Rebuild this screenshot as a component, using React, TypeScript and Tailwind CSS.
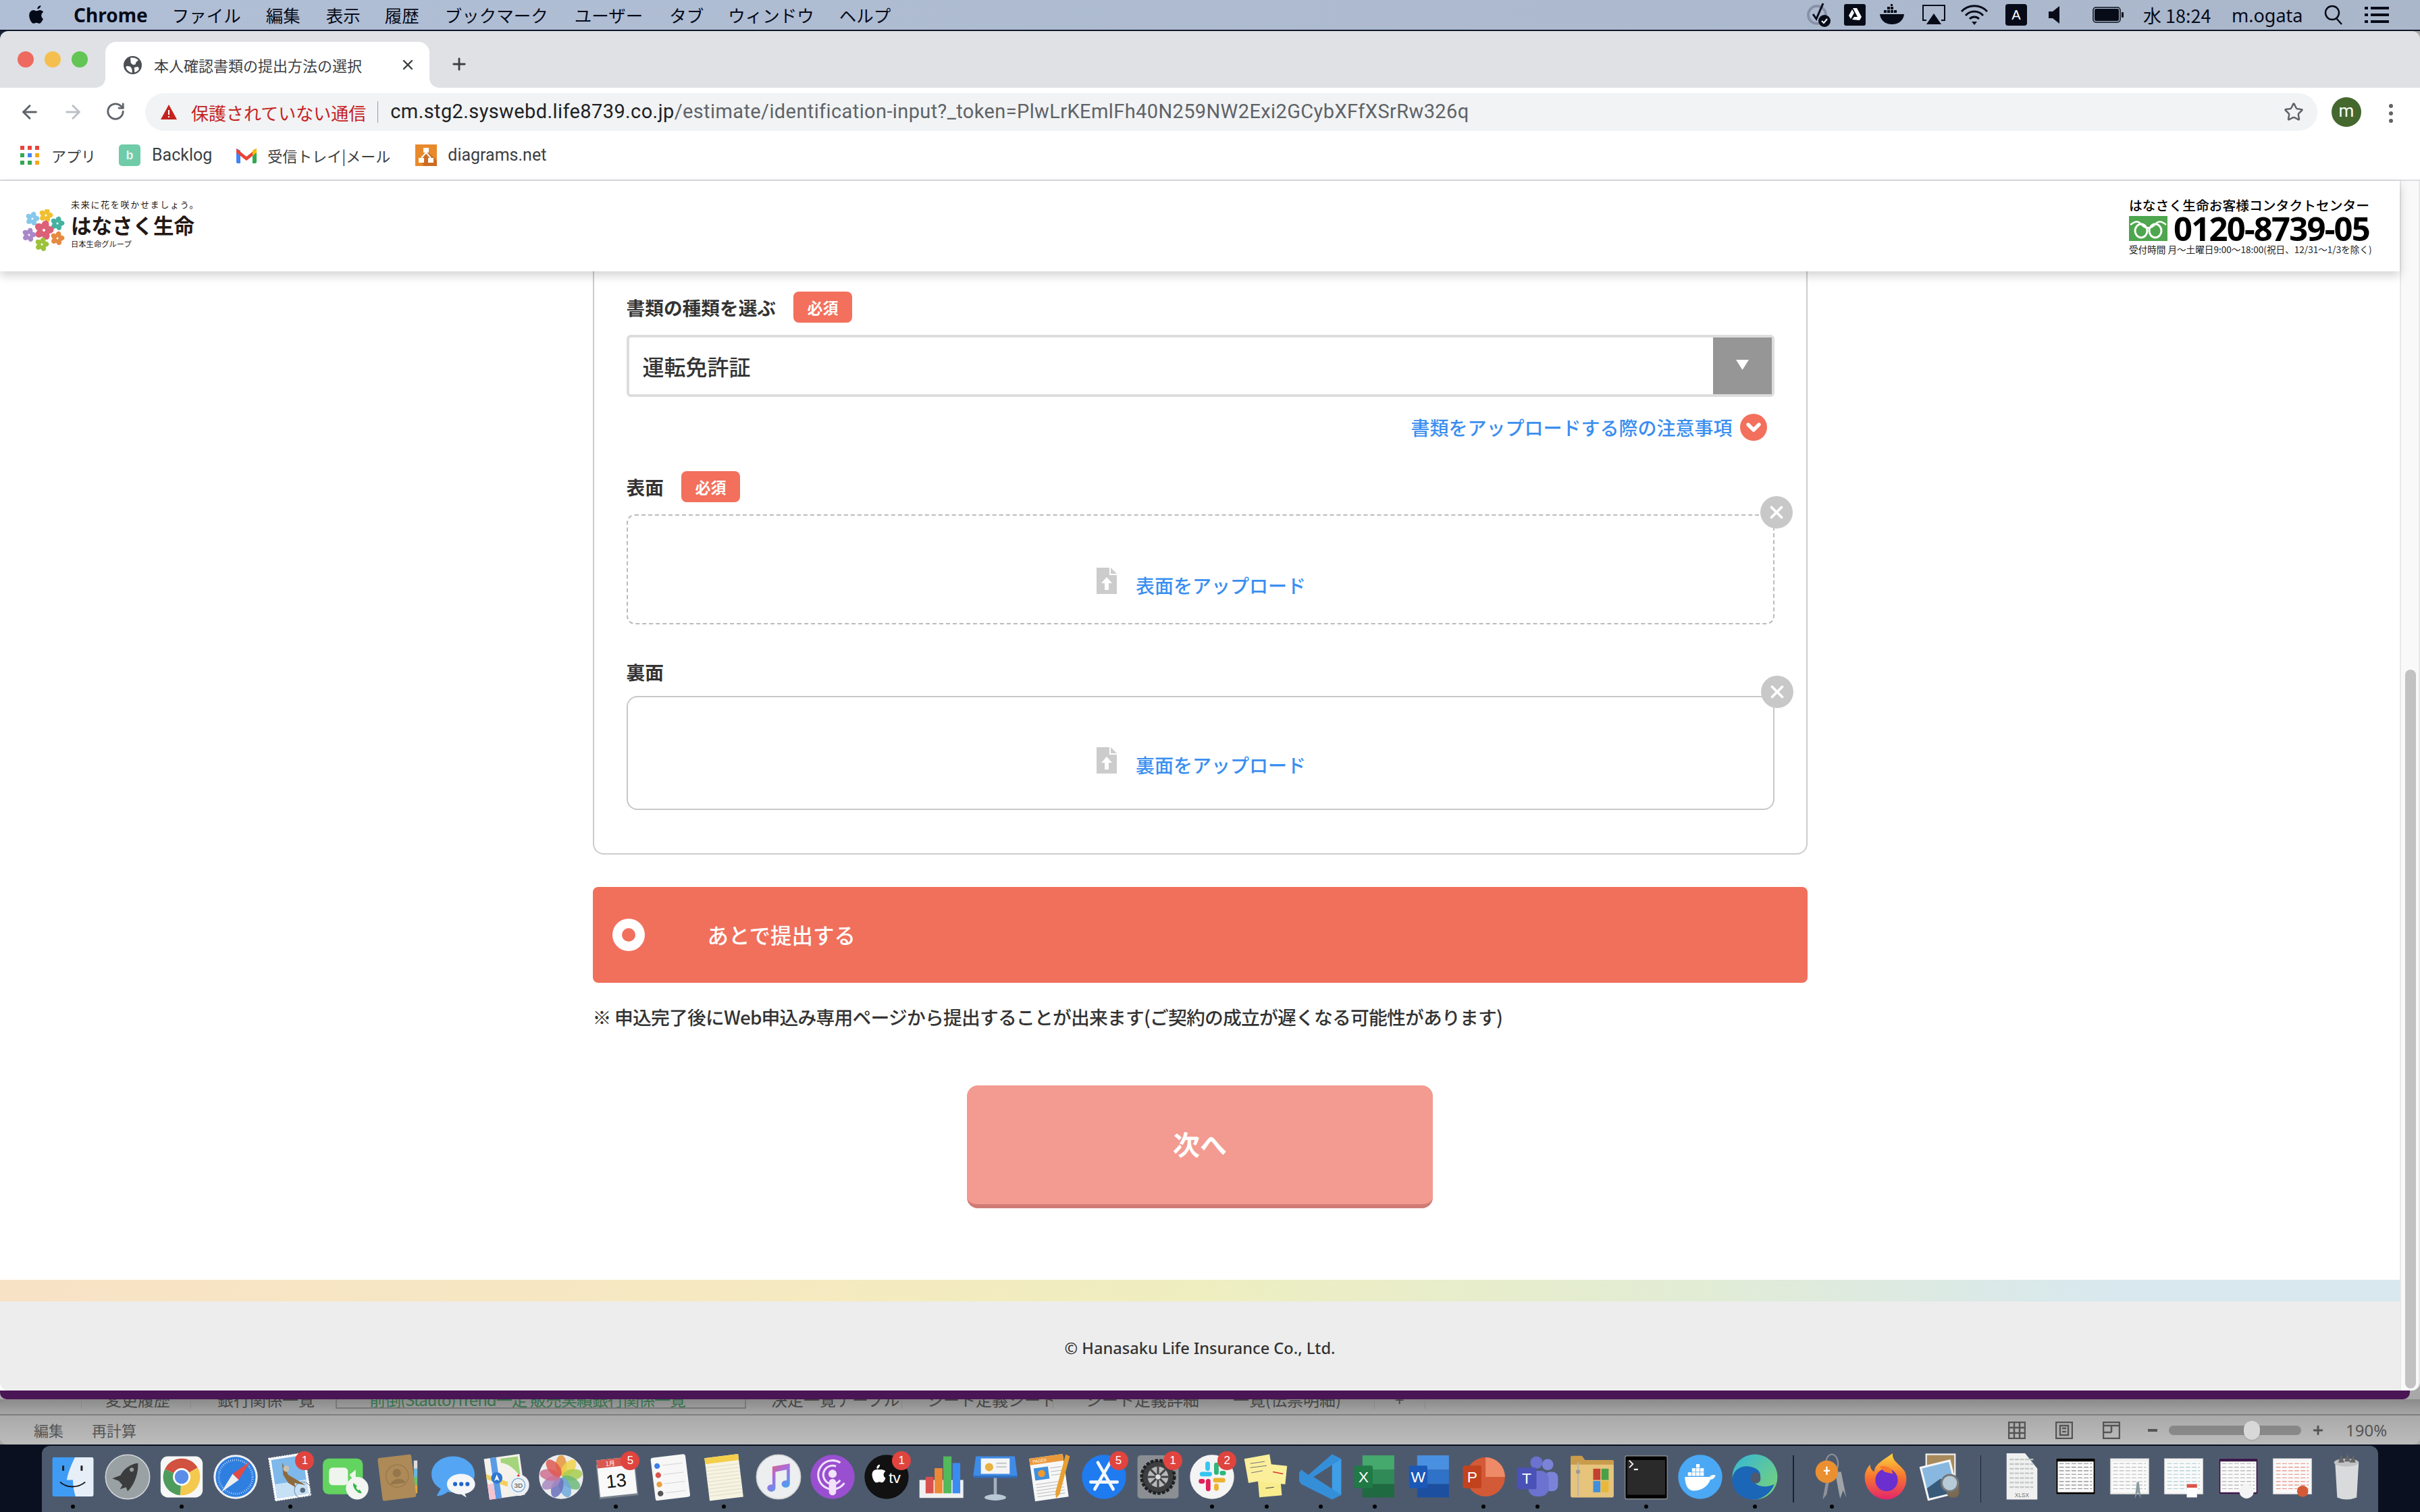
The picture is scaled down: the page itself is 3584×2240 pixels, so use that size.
import { ArrowLeft, ArrowRight, ChevronDown, Plus, RotateCw, Star, X } from "lucide-react";
import type { ReactNode } from "react";

const Svg = ({ children, className = "w-[76px] h-[76px]" }: { children: ReactNode; className?: string }) => (
  <svg viewBox="0 0 100 100" className={className}>
    {children}
  </svg>
);

const sector = (a0: number, a1: number, r: number, c = 50) => {
  const p = (a: number) => `${c + r * Math.cos((a * Math.PI) / 180)} ${c + r * Math.sin((a * Math.PI) / 180)}`;
  return `M${c} ${c}L${p(a0)}A${r} ${r} 0 ${a1 - a0 > 180 ? 1 : 0} 1 ${p(a1)}Z`;
};

/* dock icons */
const Finder = () => (
  <Svg>
    <rect x="10" y="12" width="80" height="76" rx="3" fill="#3f9cf5" />
    <path d="M54 12C46 28 40 44 38 56H50C50 68 52 78 55 88H87q3 0 3-3V15q0-3-3-3Z" fill="#e6eff8" />
    <rect x="29" y="28" width="4" height="10" fill="#222" />
    <rect x="65" y="28" width="4" height="10" fill="#222" />
    <path d="M25 60C38 72 60 72 74 60" stroke="#111" strokeWidth="2.5" fill="none" />
  </Svg>
);
const Launchpad = () => (
  <Svg>
    <circle cx="50" cy="50" r="43" fill="#9aa1a4" stroke="#d4d6d8" strokeWidth="2" />
    <path d="M70 23C55 25 42 35 36 47L20 53L33 58L40 66L35 74L47 70L50 78C62 68 72 42 70 23Z" fill="#3a3c3e" />
    <circle cx="58" cy="36" r="4" fill="#999" />
  </Svg>
);
const Chrome = () => (
  <Svg>
    <rect x="9" y="10" width="82" height="80" rx="14" fill="#f7f7f7" />
    <path d={sector(-155, -30, 36)} fill="#d0523f" />
    <path d={sector(-30, 95, 36)} fill="#f3c94f" />
    <path d={sector(95, 205, 36)} fill="#4e9c5c" />
    <circle cx="50" cy="50" r="17" fill="#fff" />
    <circle cx="50" cy="50" r="13.5" fill="#5a8ee8" />
  </Svg>
);
const Safari = () => (
  <Svg>
    <circle cx="50" cy="50" r="43" fill="#eef1f4" />
    <circle cx="50" cy="50" r="39" fill="#2f7fe0" />
    <circle cx="50" cy="50" r="33" fill="none" stroke="#cfe4fb" strokeWidth="4" strokeDasharray="1 3" />
    <path d="M78 20L44 44L56 56Z" fill="#e24a44" />
    <path d="M22 80L44 44L56 56Z" fill="#eee" />
  </Svg>
);
const Mail = () => (
  <Svg>
    <g transform="rotate(-9 48 50)">
      <rect x="14" y="8" width="70" height="84" fill="#fff" stroke="#fff" strokeDasharray="3 2" strokeWidth="2" />
      <rect x="18" y="12" width="62" height="76" fill="#7fb8ea" />
      <rect x="18" y="60" width="62" height="28" fill="#c6e0f6" />
    </g>
    <path d="M34 22L46 46L80 66L58 62L60 70L46 62L36 46Z" fill="#8d6a3e" />
    <circle cx="42" cy="34" r="6" fill="#c9c0b0" />
    <circle cx="74" cy="76" r="16" fill="none" stroke="#5a6b80" strokeWidth="1.5" strokeDasharray="2 1" />
    <circle cx="74" cy="76" r="5" fill="#5a6b80" />
  </Svg>
);
const FaceTime = () => (
  <Svg>
    <rect x="8" y="14" width="78" height="70" rx="12" fill="#62d45f" />
    <rect x="20" y="32" width="37" height="34" rx="7" fill="#eef5ec" />
    <path d="M60 46L72 36V62Z" fill="#eef5ec" />
    <circle cx="75" cy="72" r="22" fill="#f2f5f1" />
    <path d="M68 62c-2 2-1 8 4 14s10 7 12 5l-4-6-3 1c-2-1-4-4-4-6l2-2Z" fill="#35b84a" />
  </Svg>
);
const Contacts = () => (
  <Svg>
    <rect x="80" y="18" width="7" height="16" fill="#ddd" />
    <rect x="80" y="34" width="7" height="16" fill="#67b7e0" />
    <rect x="80" y="50" width="7" height="16" fill="#6cc06c" />
    <rect x="80" y="66" width="7" height="16" fill="#e5a93c" />
    <g transform="rotate(-7 50 50)">
      <rect x="14" y="9" width="66" height="84" rx="4" fill="#ad8a58" />
      <circle cx="48" cy="48" r="22" fill="none" stroke="#95764a" strokeWidth="1.5" />
      <circle cx="48" cy="42" r="8" fill="#95764a" />
      <path d="M33 63c4-12 26-12 30 0" fill="#95764a" />
    </g>
  </Svg>
);
const Messages = () => (
  <Svg>
    <path d="M50 10C26 10 8 26 8 45c0 12 7 22 18 28l-8 14c8 0 16-3 22-8 3 1 7 1 10 1 24 0 42-16 42-35S74 10 50 10Z" fill="#54a6f5" />
    <path d="M66 44c-16 0-28 9-28 20s12 20 28 20l10 6-3-7c12-3 20-10 20-19 0-11-12-20-27-20Z" fill="#f4f6f8" />
    <circle cx="54" cy="64" r="4" fill="#2166c9" />
    <circle cx="66" cy="64" r="4" fill="#2166c9" />
    <circle cx="78" cy="64" r="4" fill="#2166c9" />
  </Svg>
);
const Maps = () => (
  <Svg>
    <g transform="rotate(-8 44 50)">
      <rect x="10" y="10" width="70" height="80" fill="#f4f2ea" />
      <path d="M42 14H76V54C66 36 54 24 42 22Z" fill="#a4d47c" />
      <path d="M10 50L60 76V66L10 40Z" fill="#f2d060" />
      <rect x="22" y="10" width="12" height="80" fill="#5a9be8" />
      <rect x="10" y="60" width="12" height="30" fill="#f4c4d0" />
    </g>
    <circle cx="30" cy="52" r="11" fill="#2f78d0" />
    <path d="M30 45L35 58L30 55L25 58Z" fill="#fff" />
    <circle cx="72" cy="66" r="21" fill="#eef0f2" />
    <circle cx="72" cy="66" r="13" fill="none" stroke="#5c9bd0" strokeWidth="1.5" />
    <text x="72" y="71" textAnchor="middle" fontSize="13" fill="#444" fontFamily="Liberation Sans">3D</text>
    <path d="M72 44l3 5h-6Z" fill="#d33" />
  </Svg>
);
const Photos = () => {
  const cols = ["#e8953c", "#eed34a", "#a8cc50", "#6fb97a", "#6fa8dc", "#6a6fbc", "#a887c0", "#cf6f90", "#de5a52"];
  return (
    <Svg>
      <circle cx="50" cy="50" r="43" fill="#eceded" />
      {cols.map((c, i) => (
        <ellipse key={c} cx="50" cy="28" rx="11" ry="20" fill={c} opacity="0.85" transform={`rotate(${i * 40} 50 50)`} />
      ))}
    </Svg>
  );
};
const Calendar = () => (
  <Svg>
    <rect x="14" y="22" width="76" height="68" fill="#78828c" transform="rotate(-6 50 50)" />
    <g transform="rotate(-6 50 50)">
      <rect x="16" y="14" width="72" height="72" fill="#f9f9f9" />
      <rect x="16" y="14" width="72" height="16" fill="#d9584f" />
      <text x="42" y="27" textAnchor="middle" fontSize="12" fill="#fff" fontFamily="Noto Sans CJK JP">1月</text>
      <text x="50" y="70" textAnchor="middle" fontSize="36" fill="#111" fontFamily="Liberation Sans">13</text>
    </g>
  </Svg>
);
const Reminders = () => (
  <Svg>
    <g transform="rotate(-7 50 50)">
      <rect x="17" y="9" width="68" height="84" rx="4" fill="#f7f7f7" />
      {["#3d7fe8", "#d9534a", "#e8a040", "#555"].map((c, i) => (
        <g key={c}>
          <circle cx="28" cy={26 + i * 18} r="5.5" fill={c} />
          <path d={`M38 ${26 + i * 18}H78`} stroke="#ccc" strokeWidth="1" />
        </g>
      ))}
    </g>
  </Svg>
);
const Notes = () => (
  <Svg>
    <g transform="rotate(-7 50 50)">
      <rect x="17" y="9" width="66" height="84" fill="#f6f3e2" />
      <rect x="17" y="9" width="66" height="12" fill="#f4cf4c" />
      {[0, 1, 2, 3, 4, 5, 6, 7, 8].map((i) => (
        <path key={i} d={`M17 ${28 + i * 7}H83`} stroke="#d8d4c0" strokeWidth="1" />
      ))}
    </g>
  </Svg>
);
const Music = () => (
  <Svg>
    <defs>
      <linearGradient id="mus" x1="0" y1="0" x2="0.6" y2="1">
        <stop offset="0" stopColor="#f0596d" />
        <stop offset="0.5" stopColor="#a56fe0" />
        <stop offset="1" stopColor="#4aa0ee" />
      </linearGradient>
    </defs>
    <circle cx="50" cy="50" r="43" fill="#eceef0" stroke="#d0d2d4" strokeWidth="2" />
    <path d="M38 30L72 24V64a8 7 0 1 1-6-7V36L44 40V72a8 7 0 1 1-6-7Z" fill="url(#mus)" />
  </Svg>
);
const Podcasts = () => (
  <Svg>
    <circle cx="50" cy="50" r="43" fill="#9a4fd0" />
    <circle cx="50" cy="46" r="28" fill="none" stroke="#f1e3fa" strokeWidth="4" strokeDasharray="130 46" transform="rotate(35 50 46)" />
    <circle cx="50" cy="46" r="18" fill="none" stroke="#f1e3fa" strokeWidth="4" strokeDasharray="80 33" transform="rotate(35 50 46)" />
    <circle cx="50" cy="44" r="8" fill="#f1e3fa" />
    <rect x="43" y="54" width="14" height="32" rx="7" fill="#f1e3fa" />
  </Svg>
);
const Tv = () => (
  <Svg>
    <circle cx="50" cy="50" r="43" fill="#111" />
    <path d="M36 36c-2 0-4-2-6 0-6 0-9 6-8 12 1 7 5 14 9 13 2 0 3-1 5-1s3 1 5 1c3 0 6-5 7-9-5-3-5-10 0-13-3-3-8-4-12-3ZM37 26c-4 0-7 4-6 8 3 0 6-3 6-8Z" fill="#fff" />
    <text x="66" y="62" textAnchor="middle" fontSize="30" fill="#fff" fontFamily="Liberation Sans">tv</text>
  </Svg>
);
const Numbers = () => (
  <Svg>
    <rect x="7.5" y="56" width="85.5" height="35" fill="#f0f0f0" />
    <rect x="19.5" y="50" width="15.5" height="32" fill="#d9514e" />
    <rect x="37" y="33" width="15.5" height="49" fill="#ec8a34" />
    <rect x="54" y="10" width="16" height="72" fill="#54b85c" />
    <rect x="72" y="23" width="15" height="59" fill="#3a8cf0" />
  </Svg>
);
const Keynote = () => (
  <Svg>
    <path d="M12 10H88L93 48H7Z" fill="#3f8ce8" />
    <rect x="22" y="14" width="56" height="30" fill="#f5f5f5" />
    <circle cx="38" cy="31" r="8" fill="#e8b040" />
    <rect x="52" y="22" width="20" height="3" fill="#ccc" />
    <rect x="52" y="29" width="20" height="3" fill="#ccc" />
    <rect x="7" y="48" width="86" height="4" fill="#2d6fc4" />
    <rect x="47" y="52" width="6" height="36" fill="#a4b0ba" />
    <ellipse cx="50" cy="90" rx="21" ry="6" fill="#b8c8d4" />
  </Svg>
);
const Pages = () => (
  <Svg>
    <g transform="rotate(-8 45 50)">
      <rect x="16" y="10" width="66" height="84" fill="#f7f7f7" />
      <rect x="16" y="10" width="66" height="13" fill="#ea9a3c" />
      <text x="22" y="20" fontSize="8" fill="#fff" fontFamily="Liberation Sans">PAGES</text>
      <rect x="22" y="30" width="28" height="24" fill="#3f8fdc" />
      <circle cx="36" cy="42" r="7" fill="#ef9a30" />
      {[0, 1, 2, 3, 4].map((i) => (
        <path key={i} d={`M22 ${62 + i * 6}H76`} stroke="#bbb" strokeWidth="1.5" />
      ))}
      {[0, 1, 2].map((i) => (
        <path key={i} d={`M54 ${34 + i * 7}H76`} stroke="#bbb" strokeWidth="1.5" />
      ))}
    </g>
    <path d="M82 6L90 10L70 84L63 92L62 80Z" fill="#e8a030" />
  </Svg>
);
const AppStore = () => (
  <Svg>
    <circle cx="50" cy="50" r="43" fill="#1f7bf0" />
    <path d="M38 22L68 74M62 22L32 74M24 60H76" stroke="#f2f7fd" strokeWidth="6" strokeLinecap="round" fill="none" />
  </Svg>
);
const Prefs = () => (
  <Svg>
    <rect x="10" y="8" width="80" height="84" rx="6" fill="#8b8f93" />
    <circle cx="50" cy="50" r="32" fill="#3c3e40" stroke="#1f2022" strokeWidth="6" strokeDasharray="6 3" />
    <circle cx="50" cy="50" r="20" fill="#b6b8ba" />
    <path d="M50 30V70M30 50H70M36 36L64 64M64 36L36 64" stroke="#444" strokeWidth="4" />
    <circle cx="50" cy="50" r="5" fill="#ddd" />
  </Svg>
);
const Slack = () => (
  <Svg>
    <circle cx="50" cy="50" r="43" fill="#f4f4f4" />
    <rect x="26" y="40" width="24" height="9" rx="4.5" fill="#36c5f0" />
    <rect x="37" y="20" width="9" height="18" rx="4.5" fill="#36c5f0" />
    <rect x="54" y="22" width="9" height="24" rx="4.5" fill="#2eb67d" />
    <rect x="65" y="38" width="12" height="9" rx="4.5" fill="#2eb67d" />
    <rect x="52" y="52" width="24" height="9" rx="4.5" fill="#ecb22e" />
    <rect x="54" y="63" width="9" height="14" rx="4.5" fill="#ecb22e" />
    <rect x="38" y="54" width="9" height="24" rx="4.5" fill="#e01e5a" />
    <rect x="24" y="54" width="12" height="9" rx="4.5" fill="#e01e5a" />
  </Svg>
);
const Stickies = () => (
  <Svg>
    <rect x="34" y="52" width="44" height="36" fill="#f8ec8c" transform="rotate(-5 56 70)" />
    <rect x="40" y="26" width="48" height="36" fill="#faf09a" transform="rotate(6 64 44)" />
    <rect x="10" y="10" width="50" height="48" fill="#fbef9c" transform="rotate(-10 35 34)" />
    <path d="M18 24L46 20M18 32L50 28M20 42L42 38" stroke="#667" strokeWidth="1.2" />
    <path d="M62 40L82 44" stroke="#d33" strokeWidth="2" />
    <path d="M48 72L64 70" stroke="#445" strokeWidth="1.5" />
  </Svg>
);
const VSCode = () => (
  <Svg>
    <path d="M72 6L90 15V85L72 94Z" fill="#3f9ee8" />
    <path d="M72 6L26 46L12 36L8 42V58L12 64L72 94L90 85L36 50L90 15Z" fill="#358fd8" />
  </Svg>
);
const Office = ({ c1, c2, c3, c4, l }: { c1: string; c2: string; c3: string; c4: string; l: string }) => (
  <Svg>
    <rect x="26" y="8" width="62" height="28" fill={c1} />
    <rect x="26" y="36" width="62" height="28" fill={c2} />
    <rect x="26" y="64" width="62" height="26" fill={c3} />
    <rect x="10" y="28" width="36" height="44" rx="3" fill={c4} />
    <text x="28" y="61" textAnchor="middle" fontSize="30" fill="#fff" fontFamily="Liberation Sans">{l}</text>
  </Svg>
);
const Ppt = () => (
  <Svg>
    <circle cx="54" cy="50" r="38" fill="#d35a36" />
    <path d={sector(-90, 0, 38, 0)} transform="translate(54 50)" fill="#ee8a68" />
    <rect x="10" y="28" width="36" height="44" rx="3" fill="#c2421e" />
    <text x="28" y="61" textAnchor="middle" fontSize="30" fill="#fff" fontFamily="Liberation Sans">P</text>
  </Svg>
);
const Teams = () => (
  <Svg>
    <circle cx="70" cy="26" r="11" fill="#7b83d8" />
    <circle cx="48" cy="22" r="12" fill="#6b72cf" />
    <rect x="64" y="40" width="26" height="38" rx="11" fill="#7b83d8" />
    <rect x="32" y="38" width="40" height="50" rx="16" fill="#6b72cf" />
    <rect x="10" y="32" width="38" height="42" rx="3" fill="#4a52b8" />
    <text x="29" y="63" textAnchor="middle" fontSize="30" fill="#fff" fontFamily="Liberation Sans">T</text>
  </Svg>
);
const Zip = () => (
  <Svg>
    <rect x="8" y="18" width="84" height="72" rx="3" fill="#e6c47c" />
    <path d="M8 24V12q0-3 3-3H30l6 8H90q2 0 2 3V26H8Z" fill="#c99c4c" />
    <rect x="21" y="22" width="3" height="66" fill="#b8b8a8" />
    <circle cx="22.5" cy="40" r="4" fill="#999" />
    <rect x="52" y="34" width="14" height="22" fill="#c44030" />
    <rect x="68" y="34" width="14" height="22" fill="#4aa048" />
    <rect x="52" y="58" width="14" height="22" fill="#3f8fdc" />
    <rect x="68" y="58" width="14" height="22" fill="#eab838" />
  </Svg>
);
const Terminal = () => (
  <Svg>
    <rect x="9" y="9" width="82" height="84" rx="3" fill="#000" stroke="#999" strokeWidth="1.5" />
    <rect x="13" y="17" width="74" height="68" fill="#2a2a2a" />
    <path d="M17 18L24 25L17 32" stroke="#eee" strokeWidth="2.5" fill="none" />
    <rect x="26" y="34" width="8" height="3" fill="#eee" />
  </Svg>
);
const Docker = () => (
  <Svg>
    <circle cx="50" cy="50" r="43" fill="#4aa8f5" />
    <path d="M20 50H68c3-4 8-5 12-3-2 5-5 8-10 8-5 14-18 22-32 22-11 0-17-8-18-27Z" fill="#fff" />
    {[[26, 41], [34, 41], [42, 41], [50, 41], [34, 33], [42, 33], [42, 25], [50, 33]].map(([x, y]) => (
      <rect key={`${x}-${y}`} x={x} y={y} width="7" height="7" fill="#fff" />
    ))}
  </Svg>
);
const Edge = () => (
  <Svg>
    <defs>
      <linearGradient id="edg" x1="0" y1="0" x2="1" y2="1">
        <stop offset="0" stopColor="#35b6d8" />
        <stop offset="1" stopColor="#7ed56f" />
      </linearGradient>
    </defs>
    <circle cx="50" cy="50" r="44" fill="url(#edg)" />
    <path d="M6 52C10 30 34 24 52 34C66 42 62 60 48 60C58 72 76 70 88 64C80 84 62 94 48 94C22 94 4 76 6 52Z" fill="#1c66b8" />
    <path d="M50 40C66 44 64 66 48 62C38 58 40 44 50 40Z" fill="#4d5a6e" />
  </Svg>
);
const Keychain = () => (
  <Svg>
    <ellipse cx="50" cy="24" rx="12" ry="18" fill="none" stroke="#8a8f95" strokeWidth="3" />
    <path d="M56 40L66 92L72 76L78 90L68 40Z" fill="#a0a4a8" />
    <path d="M40 50L32 94L40 84L46 50Z" fill="#8e9298" />
    <circle cx="40" cy="40" r="22" fill="#ea9030" />
    <path d="M40 30v16M34 38h12" stroke="#fff" strokeWidth="3" />
  </Svg>
);
const Firefox = () => (
  <Svg>
    <defs>
      <linearGradient id="ffx" x1="0.5" y1="0" x2="0.5" y2="1">
        <stop offset="0" stopColor="#fcd53f" />
        <stop offset="0.5" stopColor="#f7762e" />
        <stop offset="1" stopColor="#e3256d" />
      </linearGradient>
    </defs>
    <path d="M62 4C60 20 78 26 86 40C96 66 76 94 50 94C24 94 4 70 8 44C10 36 14 30 18 26C18 34 22 38 26 40C26 26 42 18 62 4Z" fill="url(#ffx)" />
    <circle cx="50" cy="56" r="22" fill="#6b2fd0" />
    <path d="M36 30C50 26 62 34 62 44L46 40Z" fill="#f7762e" />
  </Svg>
);
const Preview = () => (
  <Svg>
    <rect x="22" y="6" width="56" height="40" fill="#a88a5c" stroke="#eee" strokeWidth="3" />
    <g transform="rotate(-14 48 56)">
      <rect x="16" y="22" width="62" height="68" fill="#f5f5f5" />
      <rect x="20" y="26" width="54" height="60" fill="#88b8e0" />
      <path d="M20 66L50 54L74 74V86H20Z" fill="#385a7a" />
    </g>
    <rect x="62" y="54" width="24" height="36" rx="10" fill="#7a6a52" />
    <circle cx="68" cy="62" r="16" fill="#b6cad8" stroke="#777" strokeWidth="4" />
  </Svg>
);
const Xlsx = () => (
  <Svg>
    <path d="M22 4H58L82 34V94H22Z" fill="#f0f0f0" />
    {[0, 1, 2, 3, 4, 5, 6].map((i) => (
      <path key={i} d={`M28 ${16 + i * 9}H74`} stroke="#c0c8c4" strokeWidth="3" strokeDasharray="8 2" />
    ))}
    <text x="52" y="90" textAnchor="middle" fontSize="11" fill="#777" fontFamily="Liberation Sans">XLSX</text>
  </Svg>
);
const Thumb = ({ frame, line, children }: { frame: string; line: string; children?: ReactNode }) => (
  <Svg>
    <rect x="12" y="14" width="76" height="70" fill={frame} stroke="#888" strokeWidth="0.5" />
    <rect x="15" y="20" width="70" height="60" fill="#fafafa" />
    {[0, 1, 2, 3, 4, 5, 6, 7].map((i) => (
      <path key={i} d={`M18 ${24 + i * 7}H82`} stroke={line} strokeWidth="1.5" strokeDasharray="9 3" />
    ))}
    {children}
  </Svg>
);
const Trash = () => (
  <Svg>
    <path d="M28 22H74L70 90Q50 98 32 90Z" fill="#d8dadc" />
    <ellipse cx="50" cy="22" rx="24" ry="8" fill="#c0c2c4" />
    <path d="M34 22L40 6L46 22M46 20L52 4L58 20M56 22L64 8L68 22" fill="#666" />
  </Svg>
);

const dock: (
  | { icon: ReactNode; dot?: boolean; badge?: string }
  | { sep: number }
)[] = [
  { icon: <Finder />, dot: true },
  { icon: <Launchpad /> },
  { icon: <Chrome />, dot: true },
  { icon: <Safari /> },
  { icon: <Mail />, dot: true, badge: "1" },
  { icon: <FaceTime /> },
  { icon: <Contacts /> },
  { icon: <Messages /> },
  { icon: <Maps /> },
  { icon: <Photos /> },
  { icon: <Calendar />, dot: true, badge: "5" },
  { icon: <Reminders /> },
  { icon: <Notes />, dot: true },
  { icon: <Music /> },
  { icon: <Podcasts /> },
  { icon: <Tv />, badge: "1" },
  { icon: <Numbers /> },
  { icon: <Keynote /> },
  { icon: <Pages /> },
  { icon: <AppStore />, badge: "5" },
  { icon: <Prefs />, badge: "1" },
  { icon: <Slack />, dot: true, badge: "2" },
  { icon: <Stickies />, dot: true },
  { icon: <VSCode />, dot: true },
  { icon: <Office c1="#45a86c" c2="#2f8a58" c3="#1f6a40" c4="#1f7a45" l="X" />, dot: true },
  { icon: <Office c1="#4a90e0" c2="#2f72c8" c3="#1c4fa0" c4="#1c58b8" l="W" /> },
  { icon: <Ppt />, dot: true },
  { icon: <Teams />, dot: true },
  { icon: <Zip /> },
  { icon: <Terminal />, dot: true },
  { icon: <Docker /> },
  { icon: <Edge />, dot: true },
  { sep: 34 },
  { icon: <Keychain />, dot: true },
  { icon: <Firefox /> },
  { icon: <Preview /> },
  { sep: 39 },
  { icon: <Xlsx /> },
  { icon: <Thumb frame="#000" line="#888" /> },
  { icon: <Thumb frame="#eee" line="#bbb"><path d="M64 60L60 92L66 80L72 92L68 60Z" fill="#8a9aa0" /></Thumb> },
  { icon: <Thumb frame="#f4f4f4" line="#a8ccd0"><rect x="56" y="64" width="20" height="26" fill="#fff" /><rect x="56" y="64" width="20" height="7" fill="#d9534a" /></Thumb> },
  { icon: <Thumb frame="#3a1a4a" line="#b0b0b0"><circle cx="66" cy="78" r="14" fill="#f4f4f4" /></Thumb> },
  { icon: <Thumb frame="#f4f4f4" line="#e88a80"><circle cx="70" cy="78" r="11" fill="#d35a36" /></Thumb> },
  { icon: <Trash /> },
];

const menus: [string, string][] = [
  ["ファイル", "ml-[36px]"],
  ["編集", "ml-[37px]"],
  ["表示", "ml-[38px]"],
  ["履歴", "ml-[36px]"],
  ["ブックマーク", "ml-[38px]"],
  ["ユーザー", "ml-[39px]"],
  ["タブ", "ml-[39px]"],
  ["ウィンドウ", "ml-[36px]"],
  ["ヘルプ", "ml-[37px]"],
];

const MenuBar = () => (
  <div className="flex h-[46px] border-b-2 border-[#0e1728] bg-[linear-gradient(to_right,#b1bfd6,#aab7cb)] text-[25.500px] leading-none text-[#070b18]">
    <div className="flex items-center">
      <svg viewBox="0 0 24 28" className="ml-[41px] h-[30px] w-[28px]" fill="#050a18">
        <path d="M17 1c.2 2-1.600 5-4.700 5C12 4 14 1.300 17 1ZM20 20c-1 2.500-3 6-5 6-1.500 0-2-1-4-1s-2.600 1-4 1C4.500 26 1 20 1 15c0-5 3-7.500 6-7.500 1.800 0 3 1.200 4.200 1.200S13.500 7.500 15.600 7.500c1 0 3.400.3 5 2.600-4 2.500-3.400 8 .4 9.900Z" />
      </svg>
      <span className="ml-[40px] text-[28px] font-bold [font-family:'Noto_Sans',sans-serif]">Chrome</span>
      {menus.map(([m, c]) => (
        <span key={m} className={c}>
          {m}
        </span>
      ))}
    </div>
    <div className="ml-auto flex items-center">
      <svg viewBox="0 0 40 40" className="h-[40px] w-[40px]">
        <circle cx="17" cy="20" r="13" fill="none" stroke="#8792a8" strokeWidth="4" />
        <path d="M11 19l5 7L26 3" stroke="#070b18" strokeWidth="3" fill="none" />
        <circle cx="28" cy="29" r="9" fill="#070b18" />
        <path d="M24 29l3 3 5-6" stroke="#fff" strokeWidth="2" fill="none" />
      </svg>
      <svg viewBox="0 0 32 32" className="ml-[17px] h-[32px] w-[32px]">
        <rect width="32" height="32" rx="3" fill="#070b18" />
        <path d="M13 6h6l7 13h-6ZM12 8l3 5-5 9-3-5ZM12 23l3-4h11l-3 5Z" fill="#fff" />
      </svg>
      <svg viewBox="0 0 36 32" className="ml-[21px] h-[32px] w-[36px]" fill="#070b18">
        <path d="M0 15h36c-1 9-8 15-18 15S1 24 0 15Z" />
        <path d="M6 9h4v4H6ZM11 9h4v4h-4ZM16 9h4v4h-4ZM21 9h4v4h-4ZM11 4h4v4h-4ZM16 4h4v4h-4ZM16 0h3v3h-3Z" />
      </svg>
      <svg viewBox="0 0 36 32" className="ml-[26px] h-[32px] w-[36px]">
        <path d="M7 24H2V2h32v22h-5" fill="none" stroke="#070b18" strokeWidth="2" />
        <path d="M18 14l11 16H7Z" fill="#070b18" />
      </svg>
      <svg viewBox="0 0 42 32" className="ml-[21px] h-[32px] w-[42px]" fill="none" stroke="#070b18" strokeWidth="3">
        <path d="M2 11C12 0 30 0 40 11M8 17C15 9 27 9 34 17M14 22c4-4 10-4 14 0" />
        <path d="M21 31l-4-5h8Z" fill="#070b18" stroke="none" />
      </svg>
      <span className="ml-[25px] flex h-[32px] w-[32px] items-center justify-center rounded-[4px] bg-[#070b18] text-[20px] text-white [font-family:'Liberation_Sans',sans-serif]">
        A
      </span>
      <svg viewBox="0 0 18 26" className="ml-[32px] h-[26px] w-[18px]" fill="#070b18">
        <path d="M0 8h6l10-8v26L6 18H0Z" />
      </svg>
      <svg viewBox="0 0 46 24" className="ml-[47px] h-[24px] w-[46px]">
        <rect x="1" y="1" width="40" height="22" rx="4" fill="none" stroke="#070b18" strokeWidth="1.500" />
        <rect x="3" y="3" width="36" height="18" rx="2" fill="#070b18" />
        <rect x="43" y="8" width="3" height="8" rx="1" fill="#070b18" />
      </svg>
      <span className="ml-[29px] w-[104px] whitespace-nowrap text-[27px]">水 18:24</span>
      <span className="ml-[27px] w-[105px] text-[27px] [font-family:'Noto_Sans',sans-serif]">m.ogata</span>
      <svg viewBox="0 0 28 30" className="ml-[32px] h-[30px] w-[28px]" fill="none" stroke="#070b18" strokeWidth="2.500">
        <circle cx="12" cy="12" r="10" />
        <path d="M18 20l8 9" />
      </svg>
      <svg viewBox="0 0 36 24" className="ml-[32px] mr-[46px] h-[24px] w-[36px]" fill="#070b18">
        <path d="M0 0h5v4H0ZM9 0h27v4H9ZM0 10h5v4H0ZM9 10h27v4H9ZM0 20h5v4H0ZM9 20h27v4H9Z" />
      </svg>
    </div>
  </div>
);

const TabStrip = () => (
  <div className="flex h-[84px] rounded-t-[12px] bg-[#dfe1e5] pl-[26px]">
    <div className="flex items-center gap-[16px]">
      <span className="h-[24px] w-[24px] rounded-full bg-[#ee6a5f]" />
      <span className="h-[24px] w-[24px] rounded-full bg-[#f5bf4f]" />
      <span className="h-[24px] w-[24px] rounded-full bg-[#62c554]" />
    </div>
    <div className="relative ml-[26px] mt-[16px] flex h-[68px] w-[480px] items-center rounded-t-[16px] bg-white">
      <span className="absolute bottom-0 left-[-14px] h-[14px] w-[14px] bg-[radial-gradient(circle_at_0_0,transparent_13.500px,white_14px)]" />
      <span className="absolute bottom-0 right-[-14px] h-[14px] w-[14px] bg-[radial-gradient(circle_at_100%_0,transparent_13.500px,white_14px)]" />
      <svg viewBox="0 0 24 24" className="ml-[27px] h-[27px] w-[27px]">
        <circle cx="12" cy="12" r="12" fill="#4c4f54" />
        <path d="M9 2.500c4-1 8 0 10.500 3l-3 2.500-1 3-3 .5-3-2.500ZM5 13l4 1 2 3 .500 5C7 21.500 3.500 18 3 14ZM14 15l5-1 1.500 3c-1.500 2.500-4 4-6 4.500Z" fill="#fff" />
      </svg>
      <span className="ml-[18px] text-[22px] text-[#3c4043]">本人確認書類の提出方法の選択</span>
      <X className="ml-[56px] h-[24px] w-[24px] text-[#3c4043]" strokeWidth={2.4} />
    </div>
    <Plus className="ml-[30px] mt-[35px] h-[28px] w-[28px] text-[#3c4043]" strokeWidth={2.4} />
  </div>
);

const Toolbar = () => (
  <div className="flex h-[72px] items-start bg-white pt-[8px]">
    <ArrowLeft className="ml-[28px] mt-[12px] h-[32px] w-[32px] text-[#5f6368]" strokeWidth={2.2} />
    <ArrowRight className="ml-[32px] mt-[12px] h-[32px] w-[32px] text-[#bdc1c6]" strokeWidth={2.2} />
    <RotateCw className="ml-[32px] mt-[12px] h-[30px] w-[30px] text-[#5f6368]" strokeWidth={2.2} />
    <div className="ml-[29px] flex h-[56px] w-[3217px] items-center rounded-full bg-[#f1f3f4]">
      <svg viewBox="0 0 24 22" className="ml-[22px] h-[22px] w-[26px]">
        <path d="M12 0L24 22H0Z" fill="#c5221f" />
        <rect x="11" y="8" width="2" height="7" fill="#fff" />
        <rect x="11" y="17" width="2" height="2" fill="#fff" />
      </svg>
      <span className="ml-[20px] text-[26px] text-[#c5221f]">保護されていない通信</span>
      <span className="ml-[17px] h-[32px] w-[1px] bg-[#9aa0a6]" />
      <span className="ml-[18px] whitespace-nowrap text-[29px] tracking-[0.39px] text-[#202124] [font-family:'Roboto',sans-serif]">
        cm.stg2.syswebd.life8739.co.jp
        <span className="text-[#5f6368]">/estimate/identification-input?_token=PlwLrKEmlFh40N259NW2Exi2GCybXFfXSrRw326q</span>
      </span>
      <Star className="ml-auto mr-[20px] h-[30px] w-[30px] text-[#5f6368]" strokeWidth={2} />
    </div>
    <span className="ml-[21px] mt-[6px] flex h-[44px] w-[44px] items-center justify-center rounded-full bg-[#44682e] pb-[4px] text-[26px] text-white [font-family:'Roboto',sans-serif]">
      m
    </span>
    <span className="ml-[41px] mt-[16px] flex flex-col gap-[5px]">
      <span className="h-[6px] w-[6px] rounded-full bg-[#5f6368]" />
      <span className="h-[6px] w-[6px] rounded-full bg-[#5f6368]" />
      <span className="h-[6px] w-[6px] rounded-full bg-[#5f6368]" />
    </span>
  </div>
);

const Bookmarks = () => (
  <div className="flex h-[66px] items-center border-b-2 border-[#dadce0] bg-white pb-[8px] text-[22px] text-[#3c4043]">
    <span className="ml-[30px] grid grid-cols-3 gap-[5px]">
      {["#e8453c", "#e8453c", "#e8453c", "#34a853", "#4285f4", "#f4a920", "#34a853", "#34a853", "#f4a920"].map((c, i) => (
        <svg key={i} viewBox="0 0 6 6" className="h-[6px] w-[6px]">
          <rect width="6" height="6" fill={c} />
        </svg>
      ))}
    </span>
    <span className="ml-[18px]">アプリ</span>
    <span className="ml-[34px] flex h-[32px] w-[32px] items-center justify-center rounded-[5px] bg-[#6fcba8] text-[18px] font-bold text-[#e4f6ee] [font-family:'Liberation_Sans',sans-serif]">
      b
    </span>
    <span className="ml-[17px] text-[25px] [font-family:'Roboto',sans-serif]">Backlog</span>
    <svg viewBox="0 0 30 24" className="ml-[36px] h-[24px] w-[30px]">
      <path d="M0 2l6 3v19H2a2 2 0 0 1-2-2Z" fill="#4285f4" />
      <path d="M30 2l-6 3v19h4a2 2 0 0 0 2-2Z" fill="#34a853" />
      <path d="M0 2l15 12L30 2v6L15 20 0 8Z" fill="#ea4335" />
      <path d="M24 5l6-3v6l-6 5Z" fill="#fbbc04" />
    </svg>
    <span className="ml-[16px]">受信トレイ|メール</span>
    <svg viewBox="0 0 32 32" className="ml-[37px] h-[32px] w-[32px]">
      <rect width="32" height="32" fill="#e88a2c" />
      <path d="M32 32H12L8 20l8-12 16 16Z" fill="#cc6d24" />
      <rect x="12" y="5" width="8" height="7" fill="#fff" />
      <rect x="5" y="20" width="8" height="7" fill="#fff" />
      <rect x="19" y="20" width="8" height="7" fill="#fff" />
      <path d="M16 12L9 20M16 12L23 20" stroke="#fff" strokeWidth="2" />
    </svg>
    <span className="ml-[16px] text-[25px] [font-family:'Roboto',sans-serif]">diagrams.net</span>
  </div>
);

const Badge = () => (
  <span className="flex h-[46px] w-[87px] items-center justify-center rounded-[8px] bg-[#f2705c] text-[23px] font-bold text-white">必須</span>
);

const petals = [0, 72, 144, 216, 288];
const Flower = ({ x, y, c, s = 1 }: { x: number; y: number; c: string; s?: number }) => (
  <g transform={`translate(${x} ${y}) scale(${s})`}>
    {petals.map((a) => (
      <ellipse key={a} cx="0" cy="-5.500" rx="4" ry="5" fill={c} transform={`rotate(${a + 15})`} />
    ))}
    <circle r="1.500" fill="#fff" />
  </g>
);

const Logo = () => (
  <div className="flex items-start pt-[4px]">
    <svg viewBox="0 0 64 62" className="mt-[16px] h-[62px] w-[64px]">
      <Flower x={15} y={14} c="#86c8ec" />
      <Flower x={35} y={9} c="#f0c030" />
      <Flower x={52} y={21} c="#45b2a0" />
      <Flower x={32} y={31} c="#dc6078" s={1.4} />
      <Flower x={10} y={38} c="#a888c8" />
      <Flower x={52} y={43} c="#e58a40" />
      <Flower x={29} y={52} c="#9cc23c" />
    </svg>
    <div className="ml-[8px] flex flex-col text-[#231815]">
      <span className="text-[13px] leading-[18px] tracking-[1.700px]">未来に花を咲かせましょう。</span>
      <span className="mt-[4px] text-[30.500px] font-bold leading-[34px]">はなさく生命</span>
      <span className="mt-[4px] text-[11.300px] leading-[14px]">日本生命グループ</span>
    </div>
  </div>
);

const Contact = () => (
  <div className="flex w-[360px] flex-col text-black">
    <span className="mt-[2px] whitespace-nowrap text-[19.800px] font-medium leading-[24px]">はなさく生命お客様コンタクトセンター</span>
    <div className="mt-[1px] flex h-[42px] items-center">
      <svg viewBox="0 0 57 37" className="h-[37px] w-[57px]">
        <rect width="57" height="37" fill="#4ea64e" />
        <path d="M2 13c8-6 12-6 17 0 5 6 14 6 19 0 5-6 10-6 17 0" fill="none" stroke="#fff" strokeWidth="2.500" />
        <ellipse cx="18" cy="22" rx="9" ry="10" fill="none" stroke="#fff" strokeWidth="3" />
        <ellipse cx="39" cy="22" rx="9" ry="10" fill="none" stroke="#fff" strokeWidth="3" />
      </svg>
      <span className="ml-[9px] whitespace-nowrap text-[49px] font-bold leading-[42px] tracking-[-1.800px] [font-family:'Noto_Sans',sans-serif]">0120-8739-05</span>
    </div>
    <span className="whitespace-nowrap text-[13.600px] leading-[20px] text-[#222]">受付時間 月〜土曜日9:00〜18:00(祝日、12/31〜1/3を除く)</span>
  </div>
);

const UploadIcon = () => (
  <svg viewBox="0 0 30 39" className="h-[39px] w-[30px]">
    <path d="M0 0H19V11H30V39H0Z" fill="#ccc" />
    <path d="M21 0L30 9H21Z" fill="#ccc" />
    <path d="M15 14l8 9h-5v10h-6V23H7Z" fill="#fff" />
  </svg>
);

const CloseCircle = ({ className }: { className: string }) => (
  <span className={`absolute flex h-[48px] w-[48px] items-center justify-center rounded-full bg-[#c8c8c8] ${className}`}>
    <X className="h-[30px] w-[30px] text-white" strokeWidth={3} />
  </span>
);

const UploadLabel = ({ children, className }: { children: string; className: string }) => (
  <div className={`flex items-center justify-center gap-[28px] pl-[3px] ${className}`}>
    <span className="-mt-[14px]">
      <UploadIcon />
    </span>
    <span className="text-[28px] font-medium text-[#3a8ef0]">{children}</span>
  </div>
);

const Card = () => (
  <div className="rounded-b-[16px] border-x-2 border-b-2 border-[#ccc] pb-[64px] pl-[48px] pr-[47px] pt-[30px] text-[#333]">
    <div className="flex h-[46px] items-center">
      <span className="pt-[2px] text-[27.700px] font-bold leading-none">書類の種類を選ぶ</span>
      <span className="ml-[26px]"><Badge /></span>
    </div>
    <div className="mt-[18px] flex h-[92px] rounded-[6px] border-4 border-[#ddd]">
      <span className="flex flex-1 items-center pl-[20px] text-[32px] font-medium">運転免許証</span>
      <span className="flex w-[87px] items-center justify-center bg-[#969696]">
        <svg viewBox="0 0 19 15" className="-mt-[4px] h-[15px] w-[19px]">
          <path d="M0 0H19L9.500 15Z" fill="#fff" />
        </svg>
      </span>
    </div>
    <div className="mt-[25px] flex h-[40px] items-center justify-end pr-[11px]">
      <span className="text-[28px] font-medium text-[#3a8ef0]">書類をアップロードする際の注意事項</span>
      <span className="ml-[11px] flex h-[40px] w-[40px] items-center justify-center rounded-full bg-[#f2705c]">
        <ChevronDown className="h-[32px] w-[32px] text-white" strokeWidth={4} />
      </span>
    </div>
    <div className="mt-[45px] flex h-[46px] items-center">
      <span className="pt-[2px] text-[27.700px] font-bold leading-none">表面</span>
      <span className="ml-[26px]"><Badge /></span>
    </div>
    <div className="relative mt-[18px] h-[163px] rounded-[12px] border-2 border-dashed border-[#bbb]">
      <CloseCircle className="right-[-29px] top-[-29px]" />
      <UploadLabel className="pt-[82px]">表面をアップロード</UploadLabel>
    </div>
    <div className="mt-[48px] flex h-[46px] items-center">
      <span className="text-[27.700px] font-bold leading-none">裏面</span>
    </div>
    <div className="relative mt-[12px] h-[169px] rounded-[16px] border-2 border-[#c8c8c8]">
      <CloseCircle className="right-[-30px] top-[-32px]" />
      <UploadLabel className="pt-[79px]">裏面をアップロード</UploadLabel>
    </div>
  </div>
);

const Page = () => (
  <div className="flex min-w-0 flex-1 flex-col bg-white">
    <header className="relative z-10 flex h-[134px] items-start justify-between bg-white pl-[33px] pr-[41px] pt-[22px] shadow-[0_6px_14px_rgba(0,0,0,0.18)]">
      <Logo />
      <Contact />
    </header>
    <main className="mx-auto w-[1799px]">
      <Card />
      <div className="mt-[48px] flex h-[142px] items-center rounded-[8px] bg-[#f0705c] pl-[29px]">
        <span className="flex h-[48px] w-[48px] items-center justify-center rounded-full bg-white">
          <span className="h-[20px] w-[20px] rounded-full bg-[#f0705c]" />
        </span>
        <span className="ml-[93px] text-[31.500px] font-medium text-white">あとで提出する</span>
      </div>
      <p className="mt-[31px] flex h-[40px] items-center whitespace-nowrap text-[27.800px] font-medium tracking-[-0.8px] text-[#333]">
        ※ 申込完了後にWeb申込み専用ページから提出することが出来ます(ご契約の成立が遅くなる可能性があります)
      </p>
      <button className="mx-auto mt-[81px] flex h-[182px] w-[690px] items-center justify-center rounded-[16px] border-b-[6px] border-[#cf7b76] bg-[#f39b90] pb-[4px] text-[40px] font-bold text-white">
        次へ
      </button>
    </main>
    <div className="mt-auto h-[32px] bg-[linear-gradient(to_right,#f8e2c6,#f5eac0_35%,#eeeec0_50%,#e2ecd4_70%,#d8e8ee_88%)]" />
    <footer className="flex h-[132px] items-center justify-center rounded-bl-[12px] bg-[#ededed] pt-[8px] text-[23.600px] font-medium text-[#333] [font-family:'Noto_Sans',sans-serif]">
      © Hanasaku Life Insurance Co., Ltd.
    </footer>
  </div>
);

const Scrollbar = () => (
  <div className="w-[30px] rounded-br-[12px] border-x-2 border-[#e8e8e8] bg-[#f9f9f9] pl-[6px] pt-[724px]">
    <div className="h-[1065px] w-[16px] rounded-full bg-[#c2c2c2]" />
  </div>
);

const sheets: { t: string; c: string }[] = [
  { t: "変更履歴", c: "ml-[120px] w-[162px] border-l border-[#888] pl-[35px] text-[#333]" },
  { t: "銀行関係一覧", c: "w-[215px] border-l border-[#888] pl-[39px] text-[#333]" },
  { t: "前倒(Stauto)Trend一定 販売実績銀行関係一覧", c: "w-[608px] border-x-2 border-b-2 border-[#777] pl-[48px] tracking-[-1px] text-[#1e6b3a]" },
  { t: "決定一覧テーブル", c: "w-[230px] pl-[37px] text-[#333]" },
  { t: "シート定義シート", c: "w-[224px] border-l border-[#888] pl-[37px] text-[#333]" },
  { t: "シート定義詳細", c: "w-[267px] border-l border-[#888] pl-[48px] text-[#333]" },
  { t: "一覧(伝票明細)", c: "w-[209px] text-[#333]" },
  { t: "+", c: "w-[76px] border-x border-[#888] pl-[30px] text-[#333]" },
];

const ExcelBehind = () => (
  <>
    <div className="h-[22px] overflow-hidden bg-[linear-gradient(to_bottom,#8a8a8a,#a6a6a6)]">
      <div className="flex whitespace-nowrap text-[24px]">
        {sheets.map(({ t, c }) => (
          <div key={t} className={`h-[14px] shrink-0 overflow-hidden ${c}`}>
            <span className="-mt-[14px] block leading-[28px] opacity-80">{t}</span>
          </div>
        ))}
      </div>
    </div>
    <div className="h-[2px] bg-[#7e7e7e]" />
    <div className="flex h-[43px] items-center rounded-b-[10px] bg-[linear-gradient(to_bottom,#a9a9a9,#bcbcbc)] text-[22px] text-[#555]">
      <span className="ml-[50px]">編集</span>
      <span className="ml-[42px]">再計算</span>
      <div className="ml-auto flex items-center">
        <svg viewBox="0 0 26 26" className="h-[26px] w-[26px]" fill="none" stroke="#555" strokeWidth="2.500">
          <path d="M1 1h24v24H1ZM1 9h24M1 17h24M9 1v24M17 1v24" />
        </svg>
        <svg viewBox="0 0 26 26" className="ml-[44px] h-[26px] w-[26px]" fill="none" stroke="#555" strokeWidth="2.500">
          <path d="M1 1h24v24H1ZM7 6h12v14H7ZM10 10h6M10 15h6" />
        </svg>
        <svg viewBox="0 0 26 26" className="ml-[44px] h-[26px] w-[26px]" fill="none" stroke="#555" strokeWidth="2.500">
          <path d="M1 1h24v24H1ZM1 6h24M13 6v10M1 16h12" />
        </svg>
        <span className="ml-[41px] h-[4px] w-[14px] bg-[#555]" />
        <span className="relative ml-[17px] h-[14px] w-[196px] rounded-full bg-[#888]">
          <span className="absolute left-[111px] top-[-7px] h-[28px] w-[24px] rounded-full bg-[#d8d8d8] shadow" />
        </span>
        <Plus className="ml-[15px] h-[20px] w-[20px] text-[#555]" strokeWidth={3.5} />
        <span className="ml-[31px] mr-[48px] w-[62px] text-[24px] text-[#555] [font-family:'Noto_Sans',sans-serif]">190%</span>
      </div>
    </div>
  </>
);

const Dock = () => (
  <div className="ml-[62px] mt-[2px] flex h-[98px] w-[3460px] rounded-t-[12px] bg-[#4d5a6e] pl-[6px]">
    {dock.map((d, i) =>
      "sep" in d ? (
        <div key={i} className="flex shrink-0 justify-center pt-[14px]" style={{ width: d.sep }}>
          <span className="h-[70px] w-[1.500px] bg-[#1a2230]" />
        </div>
      ) : (
        <div key={i} className="relative flex w-[80.350px] shrink-0 flex-col items-center pt-[8px]">
          {d.icon}
          {d.badge && (
            <span className="absolute left-[48px] top-[8px] flex h-[28px] w-[28px] items-center justify-center rounded-full bg-[#e0443e] text-[17px] text-white [font-family:'Liberation_Sans',sans-serif]">
              {d.badge}
            </span>
          )}
          {d.dot && <span className="mt-[3px] h-[6px] w-[6px] rounded-full bg-black" />}
        </div>
      ),
    )}
  </div>
);

export default function App() {
  return (
    <div className="flex h-[2240px] w-[3584px] flex-col overflow-hidden bg-[#0a1020] [font-family:'Noto_Sans_CJK_JP','Noto_Sans',sans-serif]">
      <MenuBar />
      <div className="flex flex-col bg-[#a8a8a8]">
        <div className="h-[2027px] w-[3569px] rounded-b-[10px] bg-[linear-gradient(to_bottom,#1a2236_50%,#4a1555_50%)]">
          <div className="flex h-[2014px] w-[3584px] flex-col">
            <TabStrip />
            <Toolbar />
            <Bookmarks />
            <div className="flex min-h-0 flex-1">
              <Page />
              <Scrollbar />
            </div>
          </div>
        </div>
        <ExcelBehind />
      </div>
      <Dock />
    </div>
  );
}
